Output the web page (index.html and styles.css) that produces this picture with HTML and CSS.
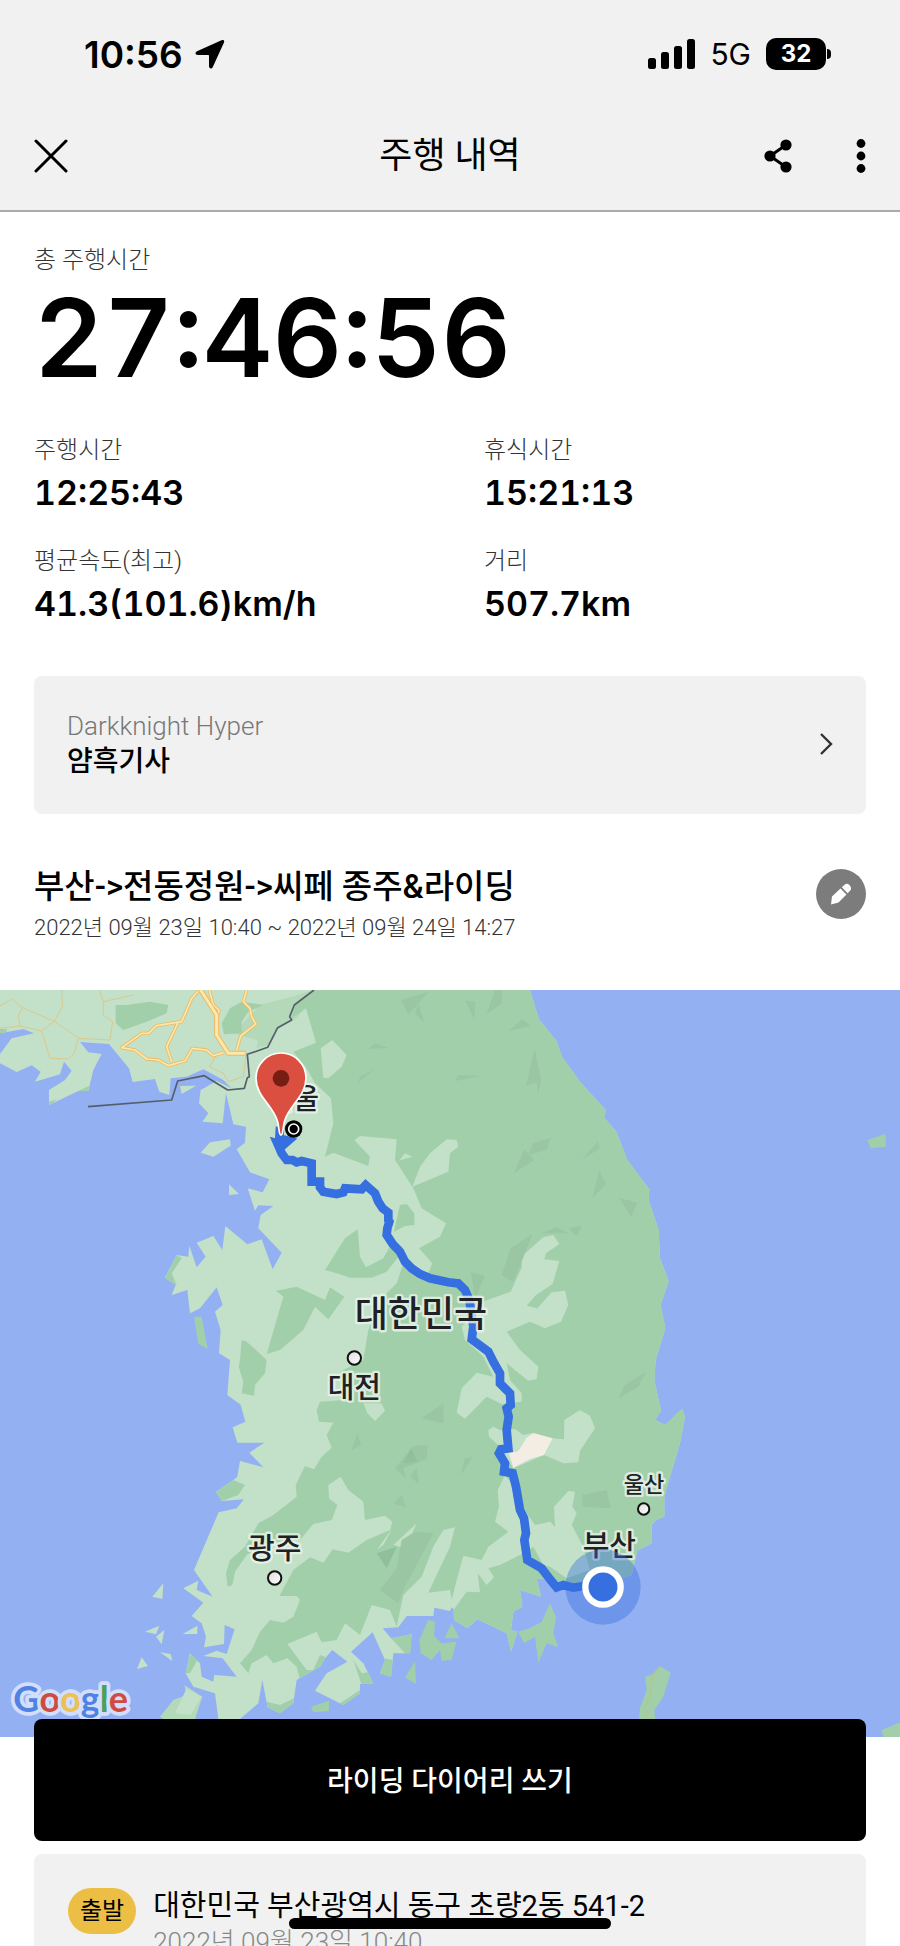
FILE: index.html
```html
<!DOCTYPE html>
<html lang="ko">
<head>
    <meta charset="UTF-8">
    <meta name="viewport" content="width=device-width, initial-scale=1.0">
    <title>주행 내역</title>
    <link rel="stylesheet" href="styles.css">
</head>
<body>
    <div class="app">
        <header class="header">
            <div class="status-bar">
                <div class="status-left">
                    <span class="clock">10:56</span>
                    <svg width="30" height="30" viewBox="0 0 30 30"><path d="M26.500 1.200 2 12.300C-.4 13.500.2 16 3 16h10c.7 0 1 .3 1 1v10c0 2.800 2.600 3.400 3.800 1L29 3.600C29.700 1.500 28.600.300 26.500 1.200Z"/></svg>
                </div>
                <div class="status-right">
                    <svg width="47" height="32" viewBox="0 0 47 32"><rect x="0" y="20" width="8" height="11" rx="2.500"/><rect x="13" y="14" width="8" height="17" rx="2.500"/><rect x="26" y="8" width="8" height="23" rx="2.500"/><rect x="39" y="1" width="8" height="30" rx="2.500"/></svg>
                    <span class="network">5G</span>
                    <div class="battery">32</div>
                </div>
            </div>
            <nav class="nav-bar">
                <button class="icon-button" aria-label="닫기">
                    <svg width="34" height="34" viewBox="0 0 34 34"><path d="M2 2 32 32M32 2 2 32" fill="none" stroke="#000" stroke-width="3" stroke-linecap="round"/></svg>
                </button>
                <h1 class="nav-title">주행 내역</h1>
                <div class="nav-actions">
                    <button class="icon-button" aria-label="공유">
                        <svg width="28" height="34" viewBox="0 0 28 34"><path d="M22 6 6 17 22 28" fill="none" stroke="#000" stroke-width="3"/><circle cx="22" cy="6" r="5.600"/><circle cx="6" cy="17" r="5.600"/><circle cx="22" cy="28" r="5.600"/></svg>
                    </button>
                    <button class="icon-button" aria-label="더보기">
                        <svg width="10" height="34" viewBox="0 0 10 34"><circle cx="5" cy="4.500" r="4.400"/><circle cx="5" cy="17" r="4.400"/><circle cx="5" cy="29.500" r="4.400"/></svg>
                    </button>
                </div>
            </nav>
        </header>

        <main>
            <section class="summary">
                <div class="label">총 주행시간</div>
                <div class="total-time">27:46:56</div>
                <div class="stats">
                    <div class="stat">
                        <div class="label">주행시간</div>
                        <div class="value">12:25:43</div>
                    </div>
                    <div class="stat">
                        <div class="label">휴식시간</div>
                        <div class="value">15:21:13</div>
                    </div>
                    <div class="stat">
                        <div class="label">평균속도(최고)</div>
                        <div class="value">41.3(101.6)km/h</div>
                    </div>
                    <div class="stat">
                        <div class="label">거리</div>
                        <div class="value">507.7km</div>
                    </div>
                </div>

                <a href="#" class="bike-card">
                    <span class="bike-text">
                        <span class="bike-model">Darkknight Hyper</span>
                        <span class="bike-name">얌흑기사</span>
                    </span>
                    <svg width="14" height="22" viewBox="0 0 14 22"><path d="M2 1 12 11 2 21" fill="none" stroke="#333" stroke-width="2.400"/></svg>
                </a>

                <div class="ride">
                    <div>
                        <h2 class="ride-title">부산-&gt;전동정원-&gt;씨페 종주&amp;라이딩</h2>
                        <div class="ride-date">2022년 09월 23일 10:40 ~ 2022년 09월 24일 14:27</div>
                    </div>
                    <button class="edit-button" aria-label="수정">
                        <svg width="24" height="24" viewBox="0 0 24 24"><path fill="#fff" d="M2 22.500 3 14.500 11.500 6.500 17.500 12.500 9.500 20.500ZM12.800 5.300 15.600 2.700Q18 .800 20.600 3.200 23.300 6 21.300 8.600L18.700 11.300Z"/></svg>
                    </button>
                </div>
            </section>

            <!-- route map, 3 units per pixel at 900px -->
            <svg class="map" viewBox="0 30 2700 2241" role="img" aria-label="주행 경로 지도">
                <defs>
                    <clipPath id="land">
                        <path id="coast" d="M0 30H1590L1617 118 1670 184 1686 230 1740 305 1817 390 1812 413 1848 453 1882 540 1948 628 1946 660 1976 750 1980 835 2006 903 1982 975 1996 1045 1967 1140 1963 1200 1983 1292 1966 1320 1996 1335 2046 1286 2055 1310 2040 1390 2010 1490 1993 1550V1610L1968 1620 1955 1635 1956 1690 1912 1712 1895 1785 1850 1800 1760 1830 1680 1820 1650 1800 1610 1795 1623 1850 1560 1830 1567 1880 1540 1895 1533 1950 1552 1955 1533 2015 1520 1960 1432 1918 1402 1945 1362 1920 1360 1865 1350 1893 1303 1883 1300 1908H1220L1195 1942 1148 1945 1173 1975 1235 1963 1230 2020 1180 2020 1173 2090 1140 2080 1155 2040 1118 1957 1053 2015 1090 2050 1120 2110 1080 2112V2140L1030 2175 945 2132 980 2080 1042 2045 997 2010 975 2035 960 2060 890 2100 880 2170 840 2200 803 2182 787 2100 775 2170 720 2217H655L645 2140 580 2120 557 2080 570 2020 600 2050 605 2090 640 2105 643 2085 710 2090 668 2035 610 2028 650 2012 680 2022 704 1948 674 1935 672 1992 612 2002 618 1970 605 1930 575 1908 610 1868 550 1825 595 1802 590 1830 638 1850 582 1770 656 1597 710 1585 732 1558 665 1563 648 1535 700 1500 712 1490 720 1443 790 1462 748 1418 793 1388H712L698 1342 736 1325 722 1274 682 1245 690 1140 657 1120 662 1050 645 995 668 975 650 922 600 985 570 1000 562 930 515 945 527 915 495 893 530 825 565 830 568 797 590 862 617 830 590 788 640 768 667 810 676 738 742 793 785 778 818 868 845 818 775 745 782 705 820 678 775 676 765 692 743 625 788 637 808 598 750 577 710 508 735 488 738 440 700 433 678 340 668 430 607 425 625 400 597 370 602 330 650 303 695 325 670 300 610 268 560 290 512 295 508 345 478 335 465 297 398 306 387 265 327 192 240 186 265 217 305 222 280 270 265 332 235 333 147 375V330L195 300 215 272 192 245 180 283 105 305 122 275 95 256 50 276 0 250V222L35 175 102 160 70 147 0 160Z"/>
                    </clipPath>
                    <linearGradient id="dot" x1="0" y1="0" x2="1" y2="1"><stop offset="0" stop-color="#ddd"/><stop offset="1" stop-color="#fff"/></linearGradient>
                </defs>
                <rect y="30" width="2700" height="2241" fill="#93b1f2"/>
                <use href="#coast" fill="#c3e0c9"/>

                <!-- forest -->
                <g clip-path="url(#land)">
                    <path fill="#b3d9b9" d="M775 160 805 105 850 88 915 85 890 115 830 150 805 195 770 205ZM700 160 780 75 875 50 940 30 870 110 830 145 770 180Z"/>
                    <path fill="#a1cfa9" d="M945 30 885 78 875 115 918 85 948 188 880 215 920 265 945 310 993 355 1000 430 975 530 1000 518 1105 558 1110 530 1063 480 1080 468 1190 478 1185 540 1240 625 1265 685 1338 730 1320 770 1257 805 1297 850 1280 890 1210 850 1190 910 1150 950 1105 1050 1090 1140 1020 1175 1030 1260 960 1265 950 1290 957 1325 1000 1328 980 1365 995 1403 965 1430 942 1468 915 1458 887 1515 890 1550 820 1605 775 1630 735 1700 690 1740 678 1780 683 1820 697 1815 705 1775 740 1725 800 1690 900 1680 940 1632 995 1620 1012 1575 987 1555 985 1515 1022 1490 1045 1530 1090 1565 1095 1620 1155 1607 1177 1625 1170 1650 1100 1680 1045 1718 998 1708 970 1748 930 1732 880 1770 838 1848 890 1848 900 1860 880 1910 850 1928 810 1920 780 1955 755 2010 720 2050 745 2080 755 2050 800 2025 820 2050 862 2035 890 2060 900 2100 970 2060 975 2030 960 2025 940 2070 920 2070 862 1992 950 1955 965 1987 1010 1980 1035 1930 1080 1965 1115 1875 1170 1890 1190 1940 1210 1845 1265 1790 1300 1700 1330 1650 1365 1642 1350 1700 1285 1838 1350 1830 1360 1885 1350 2300H2700V30Z"/>
                    <path fill="#a1cfa9" d="M347 75 380 75 450 65 505 75 500 100 440 125 370 150 347 130ZM665 130 690 85 725 65 790 75 745 95 725 125V160L672 163ZM828 932 890 920 975 960 990 922 1033 950 985 1018 945 980 910 1050 840 1110 800 1122 850 950ZM975 870 1035 775 1073 748 1080 830 1098 862 1150 835 1175 790 1200 825 1160 875 1115 893H1050L1010 880ZM1182 755 1200 675 1220 672 1243 700V735L1215 738ZM720 1140 725 1080 740 1085 770 1112 800 1140 795 1180 765 1215 762 1247 725 1240 730 1205 716 1160ZM648 1535 700 1500 735 1515 715 1545 665 1563ZM235 333 267 318 265 340ZM147 365 170 358 150 380ZM0 147 20 147V160H0ZM512 920 520 950 495 893 530 825 545 835 515 880 530 915Z"/>
                    <path fill="#a1cfa9" d="M800 2165 840 2175 882 2155 880 2210H800ZM570 2080 595 2035 575 2015 550 2080ZM1173 1975 1235 1963 1240 2020 1215 2020ZM1060 2040 1085 2080 1110 2075 1130 2115H1085ZM1020 2170 1080 2130 1090 2180H1030ZM1130 2075 1150 2035 1180 2040V2100Z"/>
                </g>

                <!-- plains -->
                <path fill="#c3e0c9" d="M962 205 997 180 1040 225 1025 260 985 295 970 293ZM1237 620 1260 560 1290 520 1340 478 1370 480 1375 500 1350 520 1345 575ZM1197 542 1215 520 1237 530ZM1090 1270 1145 1270 1155 1292 1125 1323 1102 1300Z"/>
                <path fill="#c3e0c9" d="M1455 962 1532 935 1566 860 1563 830 1630 772 1660 765 1678 792 1638 820 1633 838 1678 843 1658 912 1608 945 1580 977 1612 985 1655 937 1695 932 1705 975 1683 1025 1635 1045 1590 1025 1520 1055 1560 1110 1615 1160 1610 1197 1585 1202 1520 1150 1530 1200 1565 1240V1265L1505 1272 1460 1250 1395 1316 1370 1298 1385 1225 1430 1178 1480 1190 1450 1130 1395 1080 1385 1040Z"/>
                <path fill="#c3e0c9" d="M1465 1350 1480 1340 1500 1350 1545 1347 1570 1365 1600 1358 1655 1375 1692 1378 1693 1320 1740 1290 1770 1307 1785 1345 1740 1412 1735 1447 1690 1450 1632 1425 1540 1465 1500 1400 1467 1370Z"/>
                <path fill="#f3ede3" d="M1527 1420 1555 1413 1580 1373 1600 1360 1658 1375 1632 1425 1590 1437 1540 1463Z"/>
                <path fill="#c3e0c9" d="M1515 1485 1550 1530 1580 1600 1605 1635 1650 1625 1665 1640 1662 1580 1705 1533 1725 1535 1717 1580 1730 1600 1715 1635 1750 1700 1770 1770 1700 1795 1650 1760 1630 1755 1600 1700 1570 1720 1500 1755 1465 1765 1482 1792 1460 1815 1433 1780 1440 1837 1400 1835 1362 1888 1350 1880 1370 1800 1390 1727 1445 1740 1465 1700 1525 1655 1485 1625 1497 1580 1493 1530ZM1130 1710 1177 1645 1150 1695ZM1180 1695 1250 1630 1215 1705Z"/>

                <!-- islands -->
                <path fill="#c3e0c9" d="M602 518 630 487 690 478 692 497 640 530ZM687 613 717 642 687 645ZM540 318 588 317 545 342ZM457 1850 490 1810 487 1857ZM435 1955 478 1937 468 1963ZM468 1970 493 1950 485 1993ZM548 1962 592 1937V1962ZM480 2017 512 2022 517 2043ZM411 2067 425 2032 444 2058Z"/>
                <path fill="#b3d9b9" d="M480 2210 520 2160 560 2145 553 2115 607 2150 585 2217H490Z"/>
                <path fill="#c3e0c9" d="M525 2200 560 2125 605 2150 572 2205Z"/>
                <path fill="#a1cfa9" d="M582 1010 605 1010 623 1107 595 1092ZM933 2180 987 2162V2193L940 2197ZM1215 2092 1245 2045 1248 2112ZM1258 1980 1285 1920 1305 1925 1302 1968 1325 1990 1369 1985 1355 2040 1325 2042 1320 2010 1295 2040 1262 2020ZM1333 1975 1355 1930 1378 1975ZM1555 1955 1590 1945 1625 1925 1650 1870 1668 1912 1660 1960 1675 2002 1640 1990 1615 2048 1605 1970 1572 1990ZM1917 2217 1920 2185 1940 2130 1935 2090 1960 2082 1980 2058 2012 2078 1990 2150 1963 2190 1965 2217ZM2645 2250 2700 2227V2271H2650ZM2602 480 2656 462 2658 500 2612 505Z"/>
                <path fill="none" stroke="#b5c68b" stroke-width="4" d="M1978 2062 1958 2085 1950 2150 1935 2180 1940 2215"/>

                <!-- relief -->
                <path fill="#9ac6a3" d="M1205 60 1285 35 1225 105ZM1255 70 1273 128 1245 100ZM1105 207 1125 190 1165 203ZM1075 308 1080 290 1122 268ZM1397 62 1426 66 1423 122ZM1485 30H1505V70L1460 102ZM1526 153 1568 117 1592 138ZM1604 208 1624 300 1614 342 1610 305 1578 318ZM1365 303 1375 285 1440 288ZM1585 525 1600 490 1652 473 1640 510ZM1543 578 1573 508 1603 540ZM1745 540 1793 485 1800 505ZM1777 655 1798 570 1818 612ZM1857 653 1911 668 1894 712ZM1505 885 1532 805 1597 762 1563 850 1538 905ZM1625 760 1670 742 1705 760ZM1705 745 1746 738 1730 768ZM1413 877 1455 888 1425 955ZM1855 1255 1875 1215 1938 1175 1915 1220ZM1747 1545 1820 1530 1832 1585 1747 1580ZM1382 1485 1395 1435 1418 1432ZM1265 1315 1330 1270V1330ZM1053 1412 1072 1360 1083 1395ZM1185 1465 1240 1398 1283 1395 1280 1438 1210 1465 1218 1495ZM1230 1490 1250 1465 1257 1512ZM1180 1570 1205 1545 1218 1582ZM1140 1830 1190 1765 1205 1680 1245 1655 1300 1660 1215 1820 1195 1870Z"/>
                <path fill="#8fbf9b" d="M1210 1450 1233 1405 1252 1445ZM1130 1720 1190 1700 1160 1765Z"/>

                <!-- roads -->
                <g fill="none" stroke-linejoin="round">
                    <path stroke="#dbc98c" stroke-width="3" d="M0 78 35 57 67 83 163 124 187 80 185 30M67 83 55 108 60 138 125 153 163 124 237 175 330 180 338 125 310 105V65L400 45M125 153 150 235 205 237 222 220 235 175M310 65 298 30M0 145 60 138M650 225 628 260 670 280 685 305 730 290 738 225"/>
                    <path stroke="#ecb964" stroke-width="10" d="M598 30 575 55 545 125 470 137 445 160 425 160 365 203 405 210 440 237 475 240 505 257 555 243 577 205 620 210 640 227 670 218M533 130 500 200 515 245M628 30 640 75 657 90 655 105M740 30 730 65 750 85 755 110 767 132 722 168 710 210"/>
                    <path stroke="#fce8a8" stroke-width="5" d="M598 30 575 55 545 125 470 137 445 160 425 160 365 203 405 210 440 237 475 240 505 257 555 243 577 205 620 210 640 227 670 218M533 130 500 200 515 245M628 30 640 75 657 90 655 105M740 30 730 65 750 85 755 110 767 132 722 168 710 210"/>
                    <path stroke="#ecb964" stroke-width="15" stroke-linecap="round" d="M602 30 650 105V165L685 220H732"/>
                    <path stroke="#fce8a8" stroke-width="9" stroke-linecap="round" d="M602 30 650 105V165L685 220H732"/>
                    <path stroke="#555f6a" stroke-width="5" d="M264 380 515 360 533 303 613 287 683 330 733 325 742 293 748 290 742 223 803 202 833 143 875 120 869 110 883 75 942 30"/>
                </g>

                <path class="route" d="M840 440 838 475 865 482 850 495 832 490 845 520 860 540 878 540 890 547 905 543 935 550V605L960 605 960 622 970 635 1010 642 1030 637 1035 625 1085 628 1097 615 1125 640 1135 665 1148 685 1165 698V720L1168 725 1162 745 1160 765 1178 792 1200 815 1215 845 1235 865 1260 882 1290 895 1345 907 1375 910 1395 930 1408 960 1420 1040 1415 1078 1465 1115 1480 1145 1500 1180 1500 1210 1515 1225 1530 1240 1532 1275 1520 1285 1526 1310 1520 1350 1525 1405 1503 1408 1497 1420 1515 1450 1512 1475 1538 1480 1548 1520 1560 1590 1572 1615 1578 1660 1573 1680 1582 1740 1625 1765 1650 1798 1670 1822 1690 1815 1720 1823 1750 1818H1810"/>

                <!-- cities -->
                <g class="map-label" text-anchor="middle">
                    <text x="880" y="387" font-size="84">서울</text>
                    <text x="1263" y="1042" font-size="108">대한민국</text>
                    <text x="1063" y="1254" font-size="87">대전</text>
                    <text x="824" y="1737" font-size="87">광주</text>
                    <text x="1932" y="1536" font-size="66">울산</text>
                    <text x="1828" y="1728" font-size="87">부산</text>
                </g>
                <g fill="url(#dot)" stroke="#111" stroke-width="6">
                    <circle cx="1063" cy="1134" r="20"/>
                    <circle cx="824" cy="1794" r="20"/>
                    <circle cx="1931" cy="1587" r="17"/>
                </g>

                <circle cx="881" cy="447" r="26"/>
                <circle cx="881" cy="447" r="15" fill="none" stroke="#fff" stroke-width="5"/>
                <path fill="#da4f40" stroke="#fff" stroke-width="5" d="M843 465C836 465 838 445 833 425 819 375 768 350 768 294A75 75 0 0 1 918 294C918 350 867 375 853 425 848 445 850 465 843 465Z"/>
                <circle cx="843" cy="295" r="25" fill="#761d14"/>

                <circle cx="1809" cy="1821" r="113" fill="#356fe0" fill-opacity=".4"/>
                <circle cx="1809" cy="1821" r="53" fill="#356fe0" stroke="#fff" stroke-width="19"/>

                <text class="google" x="40" y="2195"><tspan fill="#4f82e3">G</tspan><tspan fill="#ce4b41">o</tspan><tspan fill="#ecc052">o</tspan><tspan fill="#4f82e3">g</tspan><tspan fill="#4d9f5b">l</tspan><tspan fill="#ce4b41">e</tspan></text>
            </svg>

            <section class="diary">
                <button class="diary-button">라이딩 다이어리 쓰기</button>
                <div class="place-card">
                    <span class="badge">출발</span>
                    <div>
                        <div class="address">대한민국 부산광역시 동구 초량2동 541-2</div>
                        <div class="place-date">2022년 09월 23일 10:40</div>
                    </div>
                </div>
            </section>
        </main>
        <div class="home-indicator"></div>
    </div>
</body>
</html>
```
FILE: styles.css
```css
* {
    box-sizing: border-box;
}

body {
    margin: 0;
    background: #fff;
    color: #000;
    font-family: Roboto, 'Noto Sans CJK KR', sans-serif;
}

button {
    border: none;
    background: none;
    padding: 0;
    font-family: inherit;
    cursor: pointer;
}

svg {
    display: block;
}

.app {
    position: relative;
    height: 100vh;
    overflow: hidden;
}

.header {
    background: #f1f1f1;
    border-bottom: 2px solid #aaa;
}

.status-bar {
    display: flex;
    justify-content: space-between;
    align-items: center;
    height: 108px;
    padding: 0 68px 0 84px;
    font-family: Inter, sans-serif;
}

.status-left {
    display: flex;
    align-items: center;
    gap: 12px;
}

.clock {
    font-size: 37px;
    font-weight: 600;
}

.status-right {
    display: flex;
    align-items: center;
    gap: 15px;
}

.network {
    font-size: 30px;
}

.battery {
    position: relative;
    width: 60px;
    height: 32px;
    margin-right: 6px;
    border-radius: 10px;
    background: #000;
    color: #fff;
    font-size: 24px;
    font-weight: 700;
    line-height: 32px;
    text-align: center;
}

.battery::after {
    content: '';
    position: absolute;
    right: -5px;
    top: 11px;
    width: 4px;
    height: 10px;
    border-radius: 0 4px 4px 0;
    background: #000;
}

.nav-bar {
    display: grid;
    grid-template-columns: 1fr auto 1fr;
    align-items: center;
    height: 102px;
    padding: 0 34px 6px;
}

.nav-title {
    margin: 0;
    font-size: 36px;
    font-weight: 400;
    line-height: 48px;
}

.nav-actions {
    display: flex;
    justify-content: flex-end;
    gap: 64px;
}

.summary {
    padding: 30px 34px 47px;
}

.label {
    color: #333;
    font-size: 24px;
    font-weight: 300;
    line-height: 36px;
}

.total-time {
    margin: 6px 0 40px;
    font-family: Inter, sans-serif;
    font-size: 108px;
    font-weight: 600;
    line-height: 108px;
    font-variant-numeric: tabular-nums;
}

.stats {
    display: grid;
    grid-template-columns: 1fr 1fr;
    column-gap: 68px;
    row-gap: 30px;
}

.value {
    margin-top: 5px;
    font-family: Inter, sans-serif;
    font-size: 34px;
    font-weight: 600;
    line-height: 40px;
    font-variant-numeric: tabular-nums;
}

.bike-card {
    display: flex;
    justify-content: space-between;
    align-items: center;
    margin: 52px 0 49px;
    padding: 32px 33px 34px;
    border-radius: 8px;
    background: #f1f1f1;
    color: #000;
    text-decoration: none;
}

.bike-model,
.bike-name {
    display: block;
    line-height: 36px;
}

.bike-model {
    color: #777;
    font-size: 26px;
    font-weight: 300;
}

.bike-name {
    font-size: 28px;
    font-weight: 500;
}

.ride {
    display: flex;
    justify-content: space-between;
    align-items: flex-start;
}

.ride-title {
    margin: 0 0 2px;
    font-size: 33px;
    font-weight: 500;
    line-height: 48px;
}

.ride-date {
    color: #333;
    font-size: 22px;
    font-weight: 300;
    line-height: 30px;
}

.edit-button {
    display: flex;
    align-items: center;
    justify-content: center;
    width: 50px;
    height: 50px;
    margin-top: 6px;
    border-radius: 50%;
    background: #7c7c7c;
}

.map {
    width: 100%;
}

.map-label {
    fill: #202124;
    stroke: rgba(236, 245, 238, 0.8);
    stroke-width: 14px;
    stroke-linejoin: round;
    paint-order: stroke;
    font-family: 'Noto Sans CJK KR', sans-serif;
    font-weight: 500;
}

.route {
    fill: none;
    stroke: #356fe0;
    stroke-width: 26px;
}

.google {
    stroke: #d3dffa;
    stroke-width: 22px;
    stroke-linejoin: round;
    paint-order: stroke;
    font-family: Lato, sans-serif;
    font-size: 108px;
    font-weight: 700;
}

.diary {
    position: relative;
    margin-top: -18px;
    padding: 0 34px;
}

.diary-button {
    width: 100%;
    height: 122px;
    padding-bottom: 2px;
    border-radius: 8px;
    background: #000;
    color: #fff;
    font-size: 28px;
    font-weight: 500;
}

.place-card {
    display: flex;
    align-items: flex-start;
    gap: 17px;
    margin-top: 13px;
    padding: 34px;
    border-radius: 8px;
    background: #f1f1f1;
}

.badge {
    padding: 0 12px;
    border-radius: 23px;
    background: #ecbe44;
    font-size: 24px;
    line-height: 46px;
}

.address {
    font-size: 29px;
    line-height: 36px;
}

.place-date {
    color: #888;
    font-size: 26px;
    font-weight: 300;
    line-height: 36px;
}

.home-indicator {
    position: absolute;
    left: 50%;
    bottom: 17px;
    width: 322px;
    height: 11px;
    margin-left: -161px;
    border-radius: 6px;
    background: #000;
}
```
